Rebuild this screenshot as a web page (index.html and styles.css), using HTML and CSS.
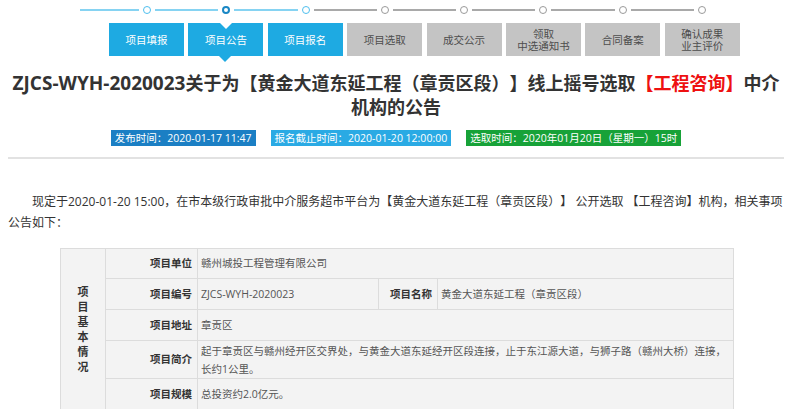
FILE: index.html
```html
<!DOCTYPE html>
<html lang="zh-CN">
<head>
<meta charset="utf-8">
<title>项目公告</title>
<link rel="stylesheet" href="styles.css">
</head>
<body>
<div class="page">
  <div class="process">
    <div class="steps">
      <span class="line lead"></span><span class="dot"></span>
      <span class="line"></span><span class="dot active"></span>
      <span class="line"></span><span class="dot"></span>
      <span class="line gray"></span><span class="dot gray"></span>
      <span class="line gray"></span><span class="dot gray"></span>
      <span class="line gray"></span><span class="dot gray"></span>
      <span class="line gray"></span><span class="dot gray"></span>
      <span class="line gray"></span><span class="dot gray"></span>
    </div>
    <div class="tabs">
      <div class="tab done">项目填报</div>
      <div class="tab done current">项目公告</div>
      <div class="tab done">项目报名</div>
      <div class="tab">项目选取</div>
      <div class="tab">成交公示</div>
      <div class="tab">领取<br>中选通知书</div>
      <div class="tab">合同备案</div>
      <div class="tab">确认成果<br>业主评价</div>
    </div>
  </div>

  <h1 class="title"><span class="code">ZJCS-WYH-2020023</span>关于为【黄金大道东延工程（章贡区段）】线上摇号选取<span class="red">【工程咨询】</span>中介机构的公告</h1>

  <div class="meta">
    <span class="badge b-pub">发布时间：2020-01-17 11:47</span>
    <span class="badge b-end">报名截止时间：2020-01-20 12:00:00</span>
    <span class="badge b-sel">选取时间：2020年01月20日（星期一）15时</span>
  </div>

  <div class="rule"></div>

  <p class="intro">现定于2020-01-20 15:00，在市本级行政审批中介服务超市平台为【黄金大道东延工程（章贡区段）】 公开选取 【工程咨询】机构，相关事项公告如下：</p>

  <table class="info">
    <colgroup>
      <col class="c1"><col class="c2"><col class="c3"><col class="c4"><col class="c5">
    </colgroup>
    <tr class="r30">
      <td class="group" rowspan="5"><div class="vert">项目基本情况</div></td>
      <td class="lbl">项目单位</td>
      <td class="val" colspan="3">赣州城投工程管理有限公司</td>
    </tr>
    <tr class="r31">
      <td class="lbl">项目编号</td>
      <td class="val">ZJCS-WYH-2020023</td>
      <td class="lbl">项目名称</td>
      <td class="val">黄金大道东延工程（章贡区段）</td>
    </tr>
    <tr class="r31">
      <td class="lbl">项目地址</td>
      <td class="val" colspan="3">章贡区</td>
    </tr>
    <tr class="r38">
      <td class="lbl">项目简介</td>
      <td class="val multi" colspan="3">起于章贡区与赣州经开区交界处，与黄金大道东延经开区段连接，止于东江源大道，与狮子路（赣州大桥）连接，<br>长约1公里。</td>
    </tr>
    <tr class="r31">
      <td class="lbl">项目规模</td>
      <td class="val" colspan="3">总投资约2.0亿元。</td>
    </tr>
  </table>
</div>
</body>
</html>
```

FILE: styles.css
```css
html, body {
  margin: 0;
  padding: 0;
  background: #fff;
}

body {
  font-family: "Open Sans", "Noto Sans CJK SC", sans-serif;
  color: #333;
  text-spacing-trim: space-all;
}

.page {
  padding: 0 6px 0 8px;
}

/* ---------- process steps ---------- */
.steps {
  display: flex;
  align-items: center;
  height: 20px;
  margin-left: 72px;
}

.line {
  width: 63.3px;
  height: 2px;
  margin: 0 4px;
  background: #86d3f2;
}

.line.lead {
  width: 59px;
  margin-left: 0;
}

.line.gray {
  background: #a9a9a9;
}

.dot {
  box-sizing: border-box;
  width: 8px;
  height: 8px;
  border-radius: 50%;
  border: 1.5px solid #4fbfee;
  background: #fff;
}

.dot.active {
  border: 2px solid #1a87c4;
}

.dot.gray {
  border-color: #9a9a9a;
}

.tabs {
  display: flex;
  gap: 4.4px;
  margin: 3px 0 0 101px;
}

.tab {
  position: relative;
  width: 75px;
  height: 33px;
  display: flex;
  align-items: center;
  justify-content: center;
  text-align: center;
  font-size: 10.5px;
  line-height: 12px;
  background: #c4c4c4;
  color: #4d4d4d;
}

.tab.done {
  background: #1eaae2;
  color: #fff;
}

.tab.current::before {
  content: "";
  position: absolute;
  top: 0;
  left: 50%;
  margin-left: -6px;
  border-left: 6px solid transparent;
  border-right: 6px solid transparent;
  border-top: 6px solid #fff;
}

.tab.current::after {
  content: "";
  position: absolute;
  top: 100%;
  left: 50%;
  margin-left: -6.5px;
  border-left: 6.5px solid transparent;
  border-right: 6.5px solid transparent;
  border-top: 6px solid #1eaae2;
}

/* ---------- title ---------- */
.title {
  margin: 15px 0 0;
  font-size: 18px;
  line-height: 24px;
  font-weight: bold;
  text-align: center;
  color: #333;
}

.title .code {
  font-size: 19px;
}

.title .red {
  color: #ee1111;
}

/* ---------- meta badges ---------- */
.meta {
  display: flex;
  justify-content: center;
  gap: 15px;
  margin-top: 11px;
}

.badge {
  height: 16px;
  line-height: 16px;
  padding: 0 4px;
  font-size: 10.5px;
  color: #fff;
  white-space: nowrap;
}

.b-pub { background: #1b7fc4; }
.b-end { background: #2aaae4; }
.b-sel { background: #17a238; }

.rule {
  height: 2px;
  margin-top: 11px;
  background: #e2e2e2;
}

/* ---------- intro ---------- */
.intro {
  margin: 32px 0 0;
  font-size: 12px;
  line-height: 21px;
  text-indent: 24px;
  color: #333;
}

/* ---------- info table ---------- */
.info {
  margin: 15px 0 0 52px;
  width: 673px;
  table-layout: fixed;
  border-collapse: collapse;
  font-size: 10.5px;
  line-height: 17px;
}

.c1 { width: 45px; }
.c2 { width: 92px; }
.c3 { width: 181px; }
.c4 { width: 59px; }
.c5 { width: 296px; }

.info td {
  border: 1px solid #dcdcdc;
  background: #f3f3f3;
  padding: 0;
  vertical-align: middle;
}

.r30 { height: 30px; }
.r31 { height: 31px; }
.r38 { height: 38px; }

.info .lbl {
  text-align: right;
  padding-right: 5px;
  font-weight: bold;
  color: #333;
}

.info .val {
  padding-left: 3px;
  color: #555;
}

.info .multi {
  line-height: 18px;
}

.group {
  text-align: center;
}

.vert {
  width: 12px;
  margin: 0 auto;
  font-size: 11px;
  line-height: 15px;
  font-weight: bold;
  color: #333;
}
```
